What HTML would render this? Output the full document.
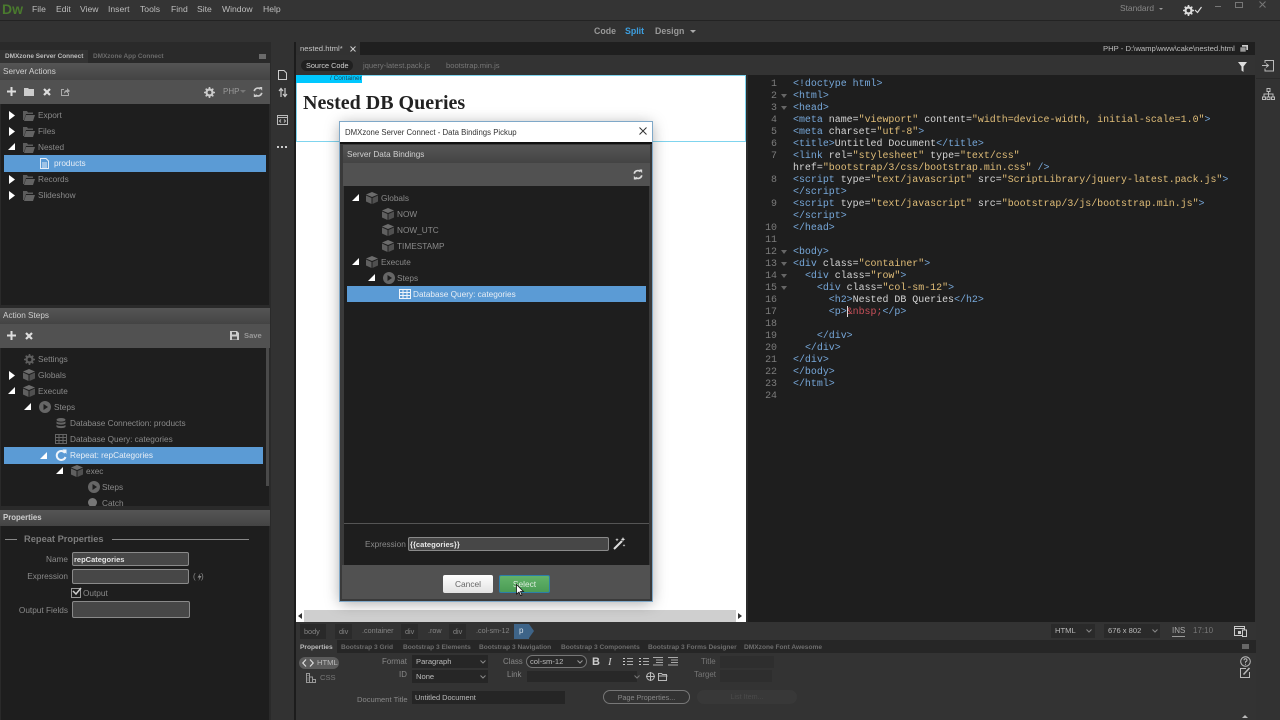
<!DOCTYPE html>
<html><head><meta charset="utf-8"><title>Dreamweaver</title>
<style>
html,body{margin:0;padding:0;width:1280px;height:720px;overflow:hidden;background:#323232}
#r{position:relative;width:1280px;height:720px;overflow:hidden;font-family:"Liberation Sans",sans-serif;font-size:9px;color:#999}
.b{position:absolute}
.t{position:absolute;white-space:nowrap;line-height:12px;font-size:8.25px;color:#8a8a8a;margin-top:1px}
svg.i{position:absolute;overflow:visible}
.m{font-size:8.6px;color:#bdbdbd;top:3px;margin-top:0}
.h{font-size:8.2px;color:#cfcfcf;left:3px}
.hd{position:absolute;background:linear-gradient(#555,#444)}
.l{position:absolute;font-family:"Liberation Mono",monospace;font-size:9.95px;line-height:12px;white-space:pre;color:#d5d5d5;left:793px}
.n{position:absolute;font-family:"Liberation Mono",monospace;font-size:9.95px;line-height:12px;color:#7c7c7c;width:32px;text-align:right;left:745px}
.l b{font-weight:normal;color:#77a8da}.l i{font-style:normal;color:#e0bd78}
.f{position:absolute;width:0;height:0;left:781px;border-left:3px solid transparent;border-right:3px solid transparent;border-top:4px solid #666}
.inp{position:absolute;background:#474747;border:1px solid #8a8a8a;border-radius:2px;box-sizing:border-box;color:#e6e6e6;font-size:7.6px;line-height:12px;padding:1px 0 0 1px}
.dk{position:absolute;background:#232323;box-sizing:border-box;color:#bbb;font-size:7.6px;line-height:13px;padding-left:4px}
.tg{position:absolute;top:624px;height:15px;line-height:15px;font-size:7.3px;color:#858585;background:#292929;padding:0 4px}
.tb{font-size:6.6px;font-weight:bold;color:#6e6e6e;top:641px}
</style></head><body><div id="r">
<svg width="0" height="0" style="position:absolute"><defs>
<g id="tr"><path d="M0 0L6 4.500L0 9Z" fill="#fff"/></g>
<g id="td"><path d="M7 0V7H0Z" fill="#fff"/></g>
<g id="fo"><path d="M0 2h4l1 1.500h5V5H3L1 11H0Z" fill="#5c5c5c"/><path d="M3 6h9l-2 6H1Z" fill="#636363"/></g>
<g id="cu"><path d="M6 0L12 2.500L6 5L0 2.500Z" fill="#6c6c6c"/><path d="M0 3.500L5.500 6V12L0 9.500Z" fill="#606060"/><path d="M6.500 6L12 3.500V9.500L6.500 12Z" fill="#505050"/></g>
<g id="pl"><circle cx="6" cy="6" r="6" fill="#666"/><path d="M4.500 3L9 6L4.500 9Z" fill="#1e1e1e"/></g>
<g id="gr"><rect x=".5" y=".5" width="11" height="9" fill="none" stroke="currentColor"/><path d="M.5 3.500h11M.5 6.500h11M4 .5v9M8 .5v9" stroke="currentColor" fill="none"/></g>
<g id="re"><path d="M10 4A4.500 4.500 0 1 0 10.500 8" fill="none" stroke="currentColor" stroke-width="2"/><path d="M7.500 0.500L11.500 0.500V5Z" fill="currentColor"/></g>
<g id="sy"><path d="M1.500 5A4.500 4.500 0 0 1 9 2.500" fill="none" stroke="currentColor" stroke-width="2"/><path d="M7.500 0L11 0V4.500Z" fill="currentColor"/><path d="M10.500 7A4.500 4.500 0 0 1 3 9.500" fill="none" stroke="currentColor" stroke-width="2"/><path d="M4.500 12L1 12V7.500Z" fill="currentColor"/></g>
<g id="ge"><circle cx="5.500" cy="5.500" r="3" fill="none" stroke="currentColor" stroke-width="2.200"/><path d="M5.500 0v2.500M5.500 8.500v2.500M0 5.500h2.500M8.500 5.500h2.500M1.700 1.700l1.800 1.800M7.500 7.500l1.800 1.800M9.300 1.700l-1.800 1.800M3.500 7.500l-1.800 1.800" stroke="currentColor" stroke-width="1.600"/></g>
<g id="plus"><path d="M3.500 0h2v3.500H9v2H5.500V9h-2V5.500H0v-2h3.500Z" fill="currentColor"/></g>
<g id="x"><path d="M1 1L7 7M7 1L1 7" stroke="currentColor" stroke-width="2.200"/></g>
</defs></svg>

<!-- top -->
<div class="b" style="left:0;top:0;width:1280px;height:20px;background:#343434"></div>
<div class="b" style="left:0;top:20px;width:1280px;height:1px;background:#232323"></div>
<div class="b" style="left:0;top:21px;width:1280px;height:21px;background:#323232"></div>
<div class="t" style="left:2px;top:1px;font-size:14px;line-height:14px;font-weight:bold;color:#4a7a2e">Dw</div>
<span class="t m" style="left:32px">File</span><span class="t m" style="left:56px">Edit</span><span class="t m" style="left:80px">View</span><span class="t m" style="left:108px">Insert</span><span class="t m" style="left:140px">Tools</span><span class="t m" style="left:171px">Find</span><span class="t m" style="left:197px">Site</span><span class="t m" style="left:222px">Window</span><span class="t m" style="left:263px">Help</span>
<span class="t" style="left:594px;top:24px;font-size:8.8px;font-weight:bold;color:#999">Code</span>
<span class="t" style="left:625px;top:24px;font-size:8.8px;font-weight:bold;color:#3d9fe0">Split</span>
<span class="t" style="left:655px;top:24px;font-size:8.8px;font-weight:bold;color:#999">Design</span>
<div class="b" style="left:690px;top:30px;border-left:3px solid transparent;border-right:3px solid transparent;border-top:3px solid #aaa"></div>
<span class="t" style="left:1120px;top:1px;font-size:8.4px;color:#888">Standard</span>
<div class="b" style="left:1159px;top:8px;border-left:2px solid transparent;border-right:2px solid transparent;border-top:2px solid #999"></div>
<svg class="i" style="left:1183px;top:5px;color:#ddd" width="11" height="11"><use href="#ge"/></svg>
<svg class="i" style="left:1195px;top:6px" width="7" height="7"><path d="M0 4L2.500 6.500L6.500 1" stroke="#ddd" fill="none" stroke-width="1.200"/></svg>
<div class="b" style="left:1215px;top:6px;width:6px;height:1px;background:#777"></div>
<div class="b" style="left:1235px;top:2px;width:6px;height:4px;border:1px solid #777"></div>
<svg class="i" style="left:1259px;top:1px" width="7" height="7"><path d="M.5 .5L6.500 6.500M6.500 .5L.5 6.500" stroke="#777"/></svg>

<!-- band -->
<div class="b" style="left:0;top:42px;width:1280px;height:8px;background:#2b2b2b"></div>

<!-- left panel -->
<div class="b" style="left:0;top:42px;width:271px;height:678px;background:#2a2a2a"></div>
<div class="b" style="left:0;top:50px;width:88px;height:13px;background:#333"></div>
<span class="t" style="left:5px;top:50px;font-size:6.45px;font-weight:bold;color:#bdbdbd">DMXzone Server Connect</span>
<span class="t" style="left:93px;top:50px;font-size:6.45px;font-weight:bold;color:#6b6b6b">DMXzone App Connect</span>
<div class="b" style="left:259px;top:54px;width:7px;height:5px;background:#6a6a6a"></div>

<div class="hd" style="left:0;top:63px;width:270px;height:17px"></div>
<span class="t h" style="top:65px">Server Actions</span>
<div class="b" style="left:0;top:80px;width:270px;height:24px;background:#515151"></div>
<svg class="i" style="left:7px;top:87px;color:#ddd" width="9" height="9"><use href="#plus"/></svg>
<svg class="i" style="left:24px;top:87px" width="10" height="9"><path d="M0 1h4l1 1h5v7H0Z" fill="#ccc"/></svg>
<svg class="i" style="left:43px;top:88px;color:#ddd" width="8" height="8"><use href="#x"/></svg>
<svg class="i" style="left:60px;top:87px" width="10" height="10"><path d="M1 2h3v1H2v5h6V6h1v3H1Z" fill="#aaa"/><path d="M4 7Q4 3 7 3V1L10 4L7 6.500V5Q5 5 4 7Z" fill="#aaa"/></svg>
<svg class="i" style="left:204px;top:87px;color:#ccc" width="11" height="11"><use href="#ge"/></svg>
<span class="t" style="left:223px;top:85px;font-size:8px;color:#999">PHP</span>
<div class="b" style="left:240px;top:90px;border-left:3px solid transparent;border-right:3px solid transparent;border-top:3px solid #777"></div>
<svg class="i" style="left:253px;top:87px;color:#ccc" width="10" height="10" viewBox="0 0 12 12"><use href="#sy"/></svg>
<div class="b" style="left:1px;top:104px;width:268px;height:201px;background:#1e1e1e"></div>
<div class="b" style="left:4px;top:155px;width:262px;height:17px;background:#5b9bd5"></div>

<svg class="i" style="left:9px;top:111px" width="6" height="9"><use href="#tr"/></svg><svg class="i" style="left:23px;top:109px" width="12" height="12"><use href="#fo"/></svg><span class="t" style="left:38px;top:109px">Export</span>
<svg class="i" style="left:9px;top:127px" width="6" height="9"><use href="#tr"/></svg><svg class="i" style="left:23px;top:125px" width="12" height="12"><use href="#fo"/></svg><span class="t" style="left:38px;top:125px">Files</span>
<svg class="i" style="left:8px;top:143px" width="7" height="7"><use href="#td"/></svg><svg class="i" style="left:23px;top:141px" width="12" height="12"><use href="#fo"/></svg><span class="t" style="left:38px;top:141px">Nested</span>
<svg class="i" style="left:40px;top:158px" width="9" height="11"><path d="M.5 .5h5.500l2.500 2.500v7.500h-8Z M2 5h5M2 7h5M2 9h5" fill="none" stroke="#e6eef7"/></svg><span class="t" style="left:54px;top:157px;color:#e8eef5">products</span>
<svg class="i" style="left:9px;top:175px" width="6" height="9"><use href="#tr"/></svg><svg class="i" style="left:23px;top:173px" width="12" height="12"><use href="#fo"/></svg><span class="t" style="left:38px;top:173px">Records</span>
<svg class="i" style="left:9px;top:191px" width="6" height="9"><use href="#tr"/></svg><svg class="i" style="left:23px;top:189px" width="12" height="12"><use href="#fo"/></svg><span class="t" style="left:38px;top:189px">Slideshow</span>

<div class="hd" style="left:0;top:308px;width:270px;height:16px"></div>
<span class="t h" style="top:309px">Action Steps</span>
<div class="b" style="left:0;top:324px;width:270px;height:24px;background:#515151"></div>
<svg class="i" style="left:7px;top:331px;color:#ddd" width="9" height="9"><use href="#plus"/></svg>
<svg class="i" style="left:25px;top:332px;color:#ddd" width="8" height="8"><use href="#x"/></svg>
<svg class="i" style="left:230px;top:331px" width="9" height="9"><path d="M0 0h7l2 2v7H0Z" fill="#ccc"/><rect x="2" y="1" width="4" height="2.500" fill="#515151"/><rect x="2" y="5.500" width="5" height="3" fill="#515151"/></svg>
<span class="t" style="left:244px;top:329px;font-size:7.6px;font-weight:bold;color:#999">Save</span>
<div class="b" style="left:1px;top:348px;width:268px;height:158px;background:#1e1e1e"></div>
<div class="b" style="left:266px;top:348px;width:3px;height:138px;background:#4a4a4a"></div>
<div class="b" style="left:4px;top:447px;width:259px;height:17px;background:#5b9bd5"></div>

<svg class="i" style="left:24px;top:354px;color:#5e5e5e" width="11" height="11"><use href="#ge"/></svg><span class="t" style="left:38px;top:353px">Settings</span>
<svg class="i" style="left:9px;top:371px" width="6" height="9"><use href="#tr"/></svg><svg class="i" style="left:23px;top:369px" width="12" height="12"><use href="#cu"/></svg><span class="t" style="left:38px;top:369px">Globals</span>
<svg class="i" style="left:8px;top:387px" width="7" height="7"><use href="#td"/></svg><svg class="i" style="left:23px;top:385px" width="12" height="12"><use href="#cu"/></svg><span class="t" style="left:38px;top:385px">Execute</span>
<svg class="i" style="left:24px;top:403px" width="7" height="7"><use href="#td"/></svg><svg class="i" style="left:39px;top:401px" width="12" height="12"><use href="#pl"/></svg><span class="t" style="left:54px;top:401px">Steps</span>
<svg class="i" style="left:56px;top:418px" width="10" height="11"><ellipse cx="5" cy="1.800" rx="4.500" ry="1.800" fill="#666"/><path d="M.5 3.500v2c2 1.500 7 1.500 9 0v-2c-2 1.500-7 1.500-9 0ZM.5 7v2c2 1.500 7 1.500 9 0v-2c-2 1.500-7 1.500-9 0Z" fill="#666"/></svg><span class="t" style="left:70px;top:417px">Database Connection: products</span>
<svg class="i" style="left:55px;top:434px;color:#666" width="12" height="10"><use href="#gr"/></svg><span class="t" style="left:70px;top:433px">Database Query: categories</span>
<svg class="i" style="left:40px;top:452px" width="7" height="7"><use href="#td"/></svg><svg class="i" style="left:55px;top:449px;color:#eef4fa" width="12" height="12"><use href="#re"/></svg><span class="t" style="left:70px;top:449px;color:#e8eef5">Repeat: repCategories</span>
<svg class="i" style="left:56px;top:467px" width="7" height="7"><use href="#td"/></svg><svg class="i" style="left:71px;top:465px" width="12" height="12"><use href="#cu"/></svg><span class="t" style="left:86px;top:465px">exec</span>
<svg class="i" style="left:88px;top:481px" width="12" height="12"><use href="#pl"/></svg><span class="t" style="left:102px;top:481px">Steps</span>
<svg class="i" style="left:88px;top:498px" width="9" height="9"><circle cx="4.500" cy="4.500" r="4.500" fill="#777"/></svg><span class="t" style="left:102px;top:497px">Catch</span>
<div class="b" style="left:0;top:506px;width:270px;height:4px;background:#2a2a2a"></div>

<div class="hd" style="left:0;top:510px;width:270px;height:16px"></div>
<span class="t h" style="top:511px;font-weight:bold;font-size:7.8px">Properties</span>
<div class="b" style="left:1px;top:526px;width:268px;height:194px;background:#1e1e1e"></div>
<div class="b" style="left:5px;top:539px;width:12px;height:1px;background:#888"></div>
<span class="t" style="left:24px;top:532px;font-size:9.3px;font-weight:bold;color:#7c7c7c">Repeat Properties</span>
<div class="b" style="left:112px;top:539px;width:137px;height:1px;background:#888"></div>
<span class="t" style="right:1212px;top:553px">Name</span>
<div class="inp" style="left:72px;top:552px;width:117px;height:14px;font-weight:bold;font-size:7.500px">repCategories</div>
<span class="t" style="right:1212px;top:570px">Expression</span>
<div class="inp" style="left:72px;top:569px;width:117px;height:15px"></div>
<span class="t" style="left:193px;top:570px;font-size:8px">(</span>
<svg class="i" style="left:196.500px;top:573px" width="5" height="8"><path d="M3.500 0L.5 4.500H2.500L1.500 8L4.500 3H2.500Z" fill="#8a8a8a"/></svg>
<span class="t" style="left:201px;top:570px;font-size:8px">)</span>
<div class="b" style="left:71px;top:588px;width:8px;height:8px;border:1px solid #999"></div>
<svg class="i" style="left:72px;top:587px" width="10" height="9"><path d="M1 4L4 7L9 1" stroke="#ccc" stroke-width="1.500" fill="none"/></svg>
<span class="t" style="left:83px;top:587px">Output</span>
<span class="t" style="right:1212px;top:604px">Output Fields</span>
<div class="inp" style="left:72px;top:601px;width:118px;height:17px"></div>

<!-- strip -->
<div class="b" style="left:271px;top:42px;width:23px;height:678px;background:#323232"></div>
<div class="b" style="left:294px;top:42px;width:2px;height:678px;background:#1c1c1c"></div>
<svg class="i" style="left:278px;top:70px" width="10" height="10"><path d="M.5 .5h5.500l2.500 2.500v6.500h-8Z" fill="none" stroke="#ccc"/></svg>
<svg class="i" style="left:278px;top:87px" width="10" height="11"><path d="M3 10V2M1 4L3 1.500L5 4M7 1v8M5 7L7 9.500L9 7" stroke="#ccc" fill="none" stroke-width="1.200"/></svg>
<svg class="i" style="left:277px;top:115px" width="11" height="11"><rect x=".5" y=".5" width="10" height="9" fill="none" stroke="#bbb"/><path d="M.5 2.500h10M4 4.500L2.500 6L4 7.500M7 4.500L8.500 6L7 7.500" stroke="#bbb" fill="none"/></svg>
<span class="b" style="left:277px;top:146px;width:2px;height:2px;background:#ccc;box-shadow:4px 0 #ccc,8px 0 #ccc"></span>

<!-- doc tabs -->
<div class="b" style="left:296px;top:42px;width:960px;height:13px;background:#1f1f1f"></div>
<div class="b" style="left:296px;top:42px;width:64px;height:13px;background:#323232"></div>
<span class="t" style="left:300px;top:42px;font-size:7.700px;color:#c4c4c4">nested.html*</span>
<svg class="i" style="left:350px;top:46px" width="6" height="6"><path d="M.5 .5L5.500 5.500M5.500 .5L.5 5.500" stroke="#ccc"/></svg>
<span class="t" style="left:1103px;top:42px;font-size:7.700px;color:#bdbdbd">PHP - D:\wamp\www\cake\nested.html</span>
<svg class="i" style="left:1240px;top:45px" width="8" height="7"><rect x="2" y="0" width="6" height="5" fill="#ccc"/><rect x="0" y="2" width="6" height="5" fill="#999" stroke="#1f1f1f" stroke-width=".6"/></svg>
<div class="b" style="left:296px;top:55px;width:960px;height:20px;background:#333"></div>
<div class="b" style="left:301px;top:60px;width:52px;height:11px;border-radius:6px;background:#202020"></div>
<span class="t" style="left:306px;top:59px;font-size:7.300px;color:#cfcfcf">Source Code</span>
<span class="t" style="left:363px;top:59px;font-size:7.600px;color:#777">jquery-latest.pack.js</span>
<span class="t" style="left:446px;top:59px;font-size:7.600px;color:#777">bootstrap.min.js</span>
<svg class="i" style="left:1238px;top:62px" width="10" height="10"><path d="M0 0h9L5.500 4.500V10L3.500 8.500V4.500Z" fill="#ddd"/></svg>

<!-- right strip -->
<div class="b" style="left:1255px;top:42px;width:25px;height:678px;background:#323232"></div>
<svg class="i" style="left:1262px;top:60px" width="12" height="12"><path d="M3 3V.5h8.500V11H3V8.500M0 5.500h6M4 3.500L6.500 5.500L4 7.500" fill="none" stroke="#bbb"/></svg>
<div class="b" style="left:1256px;top:78px;width:24px;height:1px;background:#2a2a2a"></div>
<svg class="i" style="left:1262px;top:88px" width="13" height="12"><path d="M6.500 3v3M2 9V6h9v3M6.500 6v3" stroke="#bbb" fill="none"/><rect x="5" y=".5" width="3" height="3" fill="none" stroke="#bbb"/><rect x=".5" y="9" width="3" height="2.500" fill="none" stroke="#bbb"/><rect x="5" y="9" width="3" height="2.500" fill="none" stroke="#bbb"/><rect x="9.500" y="9" width="3" height="2.500" fill="none" stroke="#bbb"/></svg>

<!-- design view -->
<div class="b" style="left:296px;top:75px;width:450px;height:547px;background:#fff"></div>
<div class="b" style="left:296px;top:75px;width:450px;height:67px;border:1px solid #7fd4ee;box-sizing:border-box"></div>
<div class="b" style="left:296px;top:75px;width:66px;height:8px;background:#00c8ff"></div>
<span class="t" style="left:330px;top:73px;font-size:6.500px;line-height:10px;color:#1c4a5c">/ Container</span>
<div class="t" style="left:303px;top:90px;font-family:'Liberation Serif',serif;font-size:20px;line-height:24px;font-weight:bold;color:#222">Nested DB Queries</div>
<div class="b" style="left:296px;top:610px;width:450px;height:12px;background:#cfcfcf"></div>
<div class="b" style="left:296px;top:610px;width:8px;height:12px;background:#fff"></div>
<div class="b" style="left:736px;top:610px;width:10px;height:12px;background:#fff"></div>
<div class="b" style="left:298px;top:613px;border-top:3px solid transparent;border-bottom:3px solid transparent;border-right:4px solid #333"></div>
<div class="b" style="left:738px;top:613px;border-top:3px solid transparent;border-bottom:3px solid transparent;border-left:4px solid #333"></div>
<div class="b" style="left:746px;top:75px;width:2px;height:547px;background:#2b2b2b"></div>

<!-- code -->
<div class="b" style="left:748px;top:75px;width:507px;height:547px;background:#1e1e1e"></div>
<div class="n" style="top:78px">1</div><div class="l" style="top:78px"><b>&lt;!doctype html&gt;</b></div>
<div class="n" style="top:90px">2</div><div class="f" style="top:94px"></div><div class="l" style="top:90px"><b>&lt;html&gt;</b></div>
<div class="n" style="top:102px">3</div><div class="f" style="top:106px"></div><div class="l" style="top:102px"><b>&lt;head&gt;</b></div>
<div class="n" style="top:114px">4</div><div class="l" style="top:114px"><b>&lt;meta</b> name=<i>"viewport"</i> content=<i>"width=device-width, initial-scale=1.0"</i><b>&gt;</b></div>
<div class="n" style="top:126px">5</div><div class="l" style="top:126px"><b>&lt;meta</b> charset=<i>"utf-8"</i><b>&gt;</b></div>
<div class="n" style="top:138px">6</div><div class="l" style="top:138px"><b>&lt;title&gt;</b>Untitled Document<b>&lt;/title&gt;</b></div>
<div class="n" style="top:150px">7</div><div class="l" style="top:150px"><b>&lt;link</b> rel=<i>"stylesheet"</i> type=<i>"text/css"</i></div>
<div class="l" style="top:162px">href=<i>"bootstrap/3/css/bootstrap.min.css"</i> <b>/&gt;</b></div>
<div class="n" style="top:174px">8</div><div class="l" style="top:174px"><b>&lt;script</b> type=<i>"text/javascript"</i> src=<i>"ScriptLibrary/jquery-latest.pack.js"</i><b>&gt;</b></div>
<div class="l" style="top:186px"><b>&lt;/script&gt;</b></div>
<div class="n" style="top:198px">9</div><div class="l" style="top:198px"><b>&lt;script</b> type=<i>"text/javascript"</i> src=<i>"bootstrap/3/js/bootstrap.min.js"</i><b>&gt;</b></div>
<div class="l" style="top:210px"><b>&lt;/script&gt;</b></div>
<div class="n" style="top:222px">10</div><div class="l" style="top:222px"><b>&lt;/head&gt;</b></div>
<div class="n" style="top:234px">11</div>
<div class="n" style="top:246px">12</div><div class="f" style="top:250px"></div><div class="l" style="top:246px"><b>&lt;body&gt;</b></div>
<div class="n" style="top:258px">13</div><div class="f" style="top:262px"></div><div class="l" style="top:258px"><b>&lt;div</b> class=<i>"container"</i><b>&gt;</b></div>
<div class="n" style="top:270px">14</div><div class="f" style="top:274px"></div><div class="l" style="top:270px">  <b>&lt;div</b> class=<i>"row"</i><b>&gt;</b></div>
<div class="n" style="top:282px">15</div><div class="f" style="top:286px"></div><div class="l" style="top:282px">    <b>&lt;div</b> class=<i>"col-sm-12"</i><b>&gt;</b></div>
<div class="n" style="top:294px">16</div><div class="l" style="top:294px">      <b>&lt;h2&gt;</b>Nested DB Queries<b>&lt;/h2&gt;</b></div>
<div class="n" style="top:306px">17</div><div class="l" style="top:306px">      <b>&lt;p&gt;</b><span style="color:#c9505a">&amp;nbsp;</span><b>&lt;/p&gt;</b></div>
<div class="b" style="left:847px;top:306px;width:1px;height:11px;background:#ddd"></div>
<div class="n" style="top:318px">18</div>
<div class="n" style="top:330px">19</div><div class="l" style="top:330px">    <b>&lt;/div&gt;</b></div>
<div class="n" style="top:342px">20</div><div class="l" style="top:342px">  <b>&lt;/div&gt;</b></div>
<div class="n" style="top:354px">21</div><div class="l" style="top:354px"><b>&lt;/div&gt;</b></div>
<div class="n" style="top:366px">22</div><div class="l" style="top:366px"><b>&lt;/body&gt;</b></div>
<div class="n" style="top:378px">23</div><div class="l" style="top:378px"><b>&lt;/html&gt;</b></div>
<div class="n" style="top:390px">24</div>

<!-- dialog -->
<div class="b" style="left:340px;top:122px;width:312px;height:479px;background:#3a3a3a;box-shadow:0 2px 14px rgba(0,0,0,.35);outline:1px solid #7fa8c8"></div>
<div class="b" style="left:340px;top:122px;width:312px;height:20px;background:#fff"></div>
<div class="b" style="left:340px;top:142px;width:312px;height:2px;background:#111"></div>
<span class="t" style="left:345px;top:126px;font-size:7.800px;color:#333">DMXzone Server Connect - Data Bindings Pickup</span>
<svg class="i" style="left:639px;top:127px" width="8" height="8"><path d="M.5 .5L7.500 7.500M7.500 .5L.5 7.500" stroke="#333"/></svg>
<div class="hd" style="left:343px;top:145px;width:307px;height:18px"></div>
<span class="t" style="left:347px;top:148px;font-size:8.200px;color:#cfcfcf">Server Data Bindings</span>
<div class="b" style="left:343px;top:163px;width:307px;height:23px;background:#515151"></div>
<svg class="i" style="left:633px;top:169px;color:#ddd" width="10" height="11" viewBox="0 0 12 12"><use href="#sy"/></svg>
<div class="b" style="left:344px;top:186px;width:305px;height:337px;background:#1e1e1e"></div>
<div class="b" style="left:347px;top:286px;width:299px;height:16px;background:#5b9bd5"></div>
<svg class="i" style="left:352px;top:194px" width="7" height="7"><use href="#td"/></svg><svg class="i" style="left:366px;top:192px" width="12" height="12"><use href="#cu"/></svg><span class="t" style="left:381px;top:192px">Globals</span>
<svg class="i" style="left:382px;top:208px" width="12" height="12"><use href="#cu"/></svg><span class="t" style="left:397px;top:208px">NOW</span>
<svg class="i" style="left:382px;top:224px" width="12" height="12"><use href="#cu"/></svg><span class="t" style="left:397px;top:224px">NOW_UTC</span>
<svg class="i" style="left:382px;top:240px" width="12" height="12"><use href="#cu"/></svg><span class="t" style="left:397px;top:240px">TIMESTAMP</span>
<svg class="i" style="left:352px;top:258px" width="7" height="7"><use href="#td"/></svg><svg class="i" style="left:366px;top:256px" width="12" height="12"><use href="#cu"/></svg><span class="t" style="left:381px;top:256px">Execute</span>
<svg class="i" style="left:368px;top:274px" width="7" height="7"><use href="#td"/></svg><svg class="i" style="left:383px;top:272px" width="12" height="12"><use href="#pl"/></svg><span class="t" style="left:397px;top:272px">Steps</span>
<svg class="i" style="left:399px;top:289px;color:#eef4fa" width="12" height="10"><use href="#gr"/></svg><span class="t" style="left:413px;top:288px;color:#e8eef5">Database Query: categories</span>
<div class="b" style="left:344px;top:523px;width:305px;height:1px;background:#555"></div>
<div class="b" style="left:344px;top:524px;width:305px;height:41px;background:#1e1e1e"></div>
<span class="t" style="left:365px;top:538px">Expression</span>
<div class="inp" style="left:408px;top:537px;width:201px;height:14px;font-weight:bold;font-size:7.600px">{{categories}}</div>
<svg class="i" style="left:613px;top:537px" width="13" height="13"><path d="M1 12L9 4" stroke="#ddd" stroke-width="2"/><path d="M10 0l.7 1.600 1.600.7-1.600.7-.7 1.600-.7-1.600-1.600-.7 1.600-.7ZM4 1l.5 1.200 1.200.5-1.200.5L4 4.400 3.500 3.200 2.300 2.700l1.200-.5ZM11 7l.4 1 1 .4-1 .4-.4 1-.4-1-1-.4 1-.4Z" fill="#ddd"/></svg>
<div class="b" style="left:342px;top:565px;width:308px;height:34px;background:#515151"></div>
<div class="b" style="left:443px;top:575px;width:50px;height:18px;border-radius:2px;background:linear-gradient(#fff,#e2e2e2);color:#666;font-size:8.400px;line-height:18px;text-align:center">Cancel</div>
<div class="b" style="left:499px;top:575px;width:51px;height:18px;box-sizing:border-box;border:1px solid #2c7fa8;border-radius:2px;background:linear-gradient(#62b269,#4b9c55);color:#dfeee0;font-size:8.400px;line-height:16px;text-align:center">Select</div>
<svg class="i" style="left:516px;top:584px" width="8" height="13"><path d="M.5 .5V10L3 8L4.500 11.500L6 11L4.500 7.500H7.500Z" fill="#fff" stroke="#111" stroke-width=".8"/></svg>

<!-- tag bar -->
<div class="b" style="left:296px;top:622px;width:960px;height:18px;background:#333"></div>
<span class="tg" style="left:300px;padding-right:6px">body</span>
<span class="tg" style="left:335px;background:#2b2b2b">div</span><span class="t" style="left:362px;top:624px;font-size:7.200px;color:#858585">.container</span>
<span class="tg" style="left:401px;background:#2b2b2b">div</span><span class="t" style="left:428px;top:624px;font-size:7.200px;color:#858585">.row</span>
<span class="tg" style="left:449px;background:#2b2b2b">div</span><span class="t" style="left:476px;top:624px;font-size:7.200px;color:#858585">.col-sm-12</span>
<div class="b" style="left:514px;top:624px;width:15px;height:15px;background:#3e6488"></div>
<div class="b" style="left:529px;top:624px;border-top:7.500px solid transparent;border-bottom:7.500px solid transparent;border-left:5px solid #3e6488"></div>
<span class="t" style="left:519px;top:624px;font-size:8px;color:#d5dfe9">p</span>
<div class="dk" style="left:1051px;top:624px;width:44px;height:14px;background:#2a2a2a;font-size:7.600px;line-height:14px">HTML</div>
<div class="dk" style="left:1104px;top:624px;width:56px;height:14px;background:#2a2a2a;font-size:7.600px;line-height:14px">676 x 802</div>
<svg class="i" style="left:1086px;top:629px" width="6" height="4"><path d="M.5 .5L3 3L5.500 .5" stroke="#888" fill="none"/></svg>
<svg class="i" style="left:1152px;top:629px" width="6" height="4"><path d="M.5 .5L3 3L5.500 .5" stroke="#888" fill="none"/></svg>
<span class="t" style="left:1172px;top:624px;font-size:8px;color:#aaa;border-bottom:1px solid #999;line-height:11px">INS</span>
<span class="t" style="left:1193px;top:624px;font-size:8px;color:#777">17:10</span>
<svg class="i" style="left:1234px;top:626px" width="13" height="11"><rect x=".5" y=".5" width="10" height="9" fill="none" stroke="#ccc"/><path d="M.5 2.500h10" stroke="#ccc"/><rect x="8.500" y="4" width="4" height="6.500" fill="#333" stroke="#ccc"/><rect x="4" y="5" width="3" height="3" fill="#ccc"/></svg>

<!-- prop tabs -->
<div class="b" style="left:296px;top:640px;width:960px;height:13px;background:#262626"></div>
<div class="b" style="left:296px;top:640px;width:41px;height:13px;background:#333"></div>
<span class="t tb" style="left:300px;color:#bdbdbd">Properties</span>
<span class="t tb" style="left:341px">Bootstrap 3 Grid</span>
<span class="t tb" style="left:403px">Bootstrap 3 Elements</span>
<span class="t tb" style="left:479px">Bootstrap 3 Navigation</span>
<span class="t tb" style="left:561px">Bootstrap 3 Components</span>
<span class="t tb" style="left:648px">Bootstrap 3 Forms Designer</span>
<span class="t tb" style="left:744px">DMXzone Font Awesome</span>
<div class="b" style="left:1242px;top:644px;width:7px;height:5px;background:#666"></div>

<!-- props -->
<div class="b" style="left:296px;top:653px;width:960px;height:67px;background:#333"></div>
<div class="b" style="left:299px;top:657px;width:40px;height:12px;border-radius:6px;background:#5c5c5c"></div>
<svg class="i" style="left:302px;top:659px" width="12" height="8"><path d="M4 .5L.8 4L4 7.500M8 .5L11.200 4L8 7.500" stroke="#ddd" fill="none" stroke-width="1.200"/></svg>
<span class="t" style="left:317px;top:656px;font-size:7.600px;color:#bbb">HTML</span>
<svg class="i" style="left:306px;top:673px" width="10" height="10"><path d="M.5 9.500V.5h3v9M3.500 4h3v5.500M6.500 6.500h3v3M0 9.500h10M1.500 2.500h1M1.500 5h1M1.500 7h1" stroke="#999" fill="none"/></svg>
<span class="t" style="left:320px;top:671px;font-size:7.600px;color:#777">CSS</span>
<span class="t" style="left:382px;top:655px;font-size:7.900px;color:#888">Format</span>
<div class="dk" style="left:412px;top:655px;width:76px;height:13px;background:#262626">Paragraph</div>
<svg class="i" style="left:480px;top:660px" width="6" height="4"><path d="M.5 .5L3 3L5.500 .5" stroke="#888" fill="none"/></svg>
<span class="t" style="left:399px;top:668px;font-size:7.900px;color:#888">ID</span>
<div class="dk" style="left:412px;top:670px;width:76px;height:13px;background:#262626">None</div>
<svg class="i" style="left:480px;top:675px" width="6" height="4"><path d="M.5 .5L3 3L5.500 .5" stroke="#888" fill="none"/></svg>
<span class="t" style="left:503px;top:655px;font-size:7.900px;color:#888">Class</span>
<div class="dk" style="left:526px;top:655px;width:61px;height:13px;border:1px solid #777;border-radius:7px;line-height:11px;background:#2a2a2a;padding-left:3px;color:#bbb">col-sm-12</div>
<svg class="i" style="left:577px;top:660px" width="6" height="4"><path d="M.5 .5L3 3L5.500 .5" stroke="#999" fill="none"/></svg>
<span class="t" style="left:592px;top:655px;font-size:11px;font-weight:bold;color:#ccc">B</span>
<span class="t" style="left:608px;top:655px;font-size:11px;font-style:italic;font-family:'Liberation Serif',serif;color:#ccc">I</span>
<svg class="i" style="left:623px;top:657px" width="56" height="9"><path d="M4 1.500h6M4 4.500h6M4 7.500h6M20 1.500h6M20 4.500h6M20 7.500h6M30 .5h10M33 3h7M33 5.500h7M30 8h10M45 .5h10M48 3h7M48 5.500h7M45 8h10" stroke="#aaa" fill="none"/><path d="M0 1h2v1H0ZM0 4h2v1H0ZM0 7h2v1H0ZM16 1h2v1h-2ZM16 4h2v1h-2ZM16 7h2v1h-2Z" fill="#ccc"/></svg>
<span class="t" style="left:507px;top:668px;font-size:7.900px;color:#888">Link</span>
<div class="dk" style="left:527px;top:671px;width:110px;height:11px;background:#282828"></div>
<svg class="i" style="left:634px;top:675px" width="6" height="4"><path d="M.5 .5L3 3L5.500 .5" stroke="#777" fill="none"/></svg>
<svg class="i" style="left:646px;top:672px" width="9" height="9"><circle cx="4.500" cy="4.500" r="3.800" fill="none" stroke="#bbb"/><path d="M4.500 0v9M0 4.500h9" stroke="#bbb"/></svg>
<svg class="i" style="left:658px;top:672px" width="10" height="9"><path d="M.5 1.500h3l1 1h4v6h-8Z M.5 4h9" stroke="#bbb" fill="none"/></svg>
<span class="t" style="left:701px;top:655px;font-size:7.900px;color:#777">Title</span>
<div class="b" style="left:720px;top:656px;width:54px;height:12px;background:#2e2e2e"></div>
<span class="t" style="left:694px;top:668px;font-size:7.900px;color:#777">Target</span>
<div class="b" style="left:720px;top:670px;width:52px;height:12px;background:#2e2e2e"></div>
<span class="t" style="left:357px;top:693px;font-size:7.600px;color:#888">Document Title</span>
<div class="dk" style="left:412px;top:691px;width:153px;height:13px;background:#252525;padding-left:3px;font-size:7.400px">Untitled Document</div>
<div class="b" style="left:603px;top:690px;width:87px;height:14px;box-sizing:border-box;border:1px solid #777;border-radius:7px;color:#888;font-size:7.200px;line-height:13px;text-align:center">Page Properties...</div>
<div class="b" style="left:697px;top:690px;width:100px;height:14px;border-radius:7px;background:#383838;color:#4b4b4b;font-size:7.200px;line-height:14px;text-align:center">List Item...</div>
<svg class="i" style="left:1240px;top:656px" width="11" height="11"><circle cx="5.500" cy="5.500" r="4.800" fill="none" stroke="#bbb"/><path d="M4 4.200Q4 2.800 5.500 2.800Q7 2.800 7 4.200Q7 5.200 5.500 5.800V6.800M5.500 7.800v1" stroke="#bbb" fill="none"/></svg>
<svg class="i" style="left:1240px;top:667px" width="11" height="11"><path d="M6 1.500H.5v9h9V5" stroke="#bbb" fill="none"/><path d="M3.500 7.500L9.500 1" stroke="#bbb" stroke-width="1.500"/></svg>
<div class="b" style="left:1242px;top:715px;border-left:3px solid transparent;border-right:3px solid transparent;border-bottom:3px solid #bbb"></div>
</div></body></html>
